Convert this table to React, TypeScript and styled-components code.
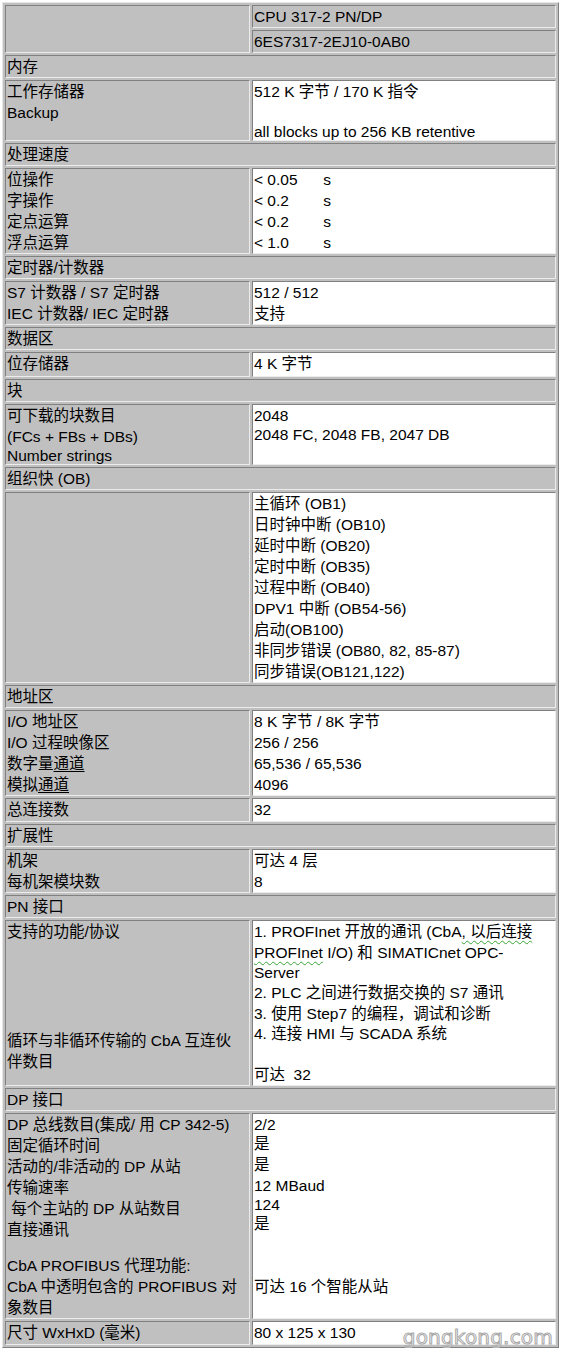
import React from 'react'
import styled, { createGlobalStyle } from 'styled-components'

type Ln = React.ReactNode | [React.ReactNode, number]

interface Pair {
  left: Ln[]
  right: Ln[]
}

type Row = { section: string } | Pair

const GlobalStyle = createGlobalStyle`
  html, body {
    margin: 0;
    padding: 0;
    background: #fff;
  }
`

const Page = styled.div`
  padding: 2px 0 0 2px;
  width: 557px;
`

const Sheet = styled.table`
  width: 557px;
  table-layout: fixed;
  border-collapse: separate;
  border-spacing: 2px;
  border: 1px solid;
  border-color: #e6e6e6 #808080 #808080 #e6e6e6;
  background: #c0c0c0;
  font-family: "Liberation Sans", "Noto Sans CJK SC", sans-serif;
  font-size: 15.5px;
  line-height: 21px;
  color: #000;
`

const KeyCol = styled.col`
  width: 245px;
`

const Cell = styled.td<{ $white?: boolean }>`
  position: relative;
  vertical-align: top;
  padding: 0 1px;
  border: 1px solid;
  border-color: #808080 #ececec #ececec #808080;
  background: ${(p) => (p.$white ? '#fff' : '#c0c0c0')};
  white-space: pre;
  overflow: visible;
`

const Line = styled.div<{ $h?: number }>`
  height: ${(p) => p.$h ?? 21}px;
  line-height: 21px;
  white-space: pre;
`

const Squiggle = styled.span`
  text-decoration: underline wavy #3aa53a;
  text-decoration-thickness: 1px;
  text-underline-offset: 3px;
`

const Under = styled.span`
  text-decoration: underline;
  text-underline-offset: 2px;
`

const Watermark = styled.span`
  position: absolute;
  right: 2px;
  bottom: -5px;
  font-family: "DejaVu Sans", sans-serif;
  font-size: 20px;
  line-height: 24px;
  letter-spacing: 0.2px;
  color: rgba(250, 250, 250, 0.9);
  -webkit-text-stroke: 1px #a8a8a8;
  pointer-events: none;
`

const rows: Row[] = [
  { section: '内存' },
  {
    left: ['工作存储器', ['Backup', 19]],
    right: ['512 K 字节 / 170 K 指令', ['', 19], ['all blocks up to 256 KB retentive', 19]],
  },
  { section: '处理速度' },
  {
    left: ['位操作', '字操作', '定点运算', '浮点运算'],
    right: ['< 0.05      s', '< 0.2        s', '< 0.2        s', '< 1.0        s'],
  },
  { section: '定时器/计数器' },
  {
    left: ['S7 计数器 / S7 定时器', 'IEC 计数器/ IEC 定时器'],
    right: ['512 / 512', '支持'],
  },
  { section: '数据区' },
  { left: [['位存储器', 23]], right: ['4 K 字节'] },
  { section: '块' },
  {
    left: ['可下载的块数目', ['(FCs + FBs + DBs)', 19], ['Number strings', 19]],
    right: [['2048', 19], '2048 FC, 2048 FB, 2047 DB'],
  },
  { section: '组织快 (OB)' },
  {
    left: [],
    right: [
      '主循环 (OB1)',
      '日时钟中断 (OB10)',
      '延时中断 (OB20)',
      '定时中断 (OB35)',
      '过程中断 (OB40)',
      'DPV1 中断 (OB54-56)',
      '启动(OB100)',
      '非同步错误 (OB80, 82, 85-87)',
      '同步错误(OB121,122)',
    ],
  },
  { section: '地址区' },
  {
    left: [
      'I/O 地址区',
      'I/O 过程映像区',
      <>数字量<Under>通道</Under></>,
      <>模拟<Under>通道</Under></>,
    ],
    right: ['8 K 字节 / 8K 字节', '256 / 256', '65,536 / 65,536', ['4096', 20]],
  },
  { left: [['总连接数', 22]], right: ['32'] },
  { section: '扩展性' },
  { left: ['机架', '每机架模块数'], right: ['可达 4 层', '8'] },
  { section: 'PN 接口' },
  {
    left: ['支持的功能/协议', ['', 88], '循环与非循环传输的 CbA 互连伙', '伴数目'],
    right: [
      <>1. PROFInet 开放的通讯 (CbA<Squiggle>, 以后连接</Squiggle></>,
      [<><Squiggle>PROFInet</Squiggle> I/O) 和 SIMATICnet OPC-</>, 20],
      ['Server', 20],
      '2. PLC 之间进行数据交换的 S7 通讯',
      ['3. 使用 Step7 的编程，调试和诊断', 20],
      ['4. 连接 HMI 与 SCADA 系统', 20],
      '',
      '可达  32',
    ],
  },
  { section: 'DP 接口' },
  {
    left: [
      'DP 总线数目(集成/ 用 CP 342-5)',
      '固定循环时间',
      '活动的/非活动的 DP 从站',
      '传输速率',
      ' 每个主站的 DP 从站数目',
      '直接通讯',
      ['', 15],
      'CbA PROFIBUS 代理功能:',
      'CbA 中透明包含的 PROFIBUS 对',
      '象数目',
    ],
    right: [
      ['2/2', 19],
      '是',
      '是',
      ['12 MBaud', 19],
      ['124', 19],
      '是',
      ['', 42],
      '可达 16 个智能从站',
    ],
  },
]

function Lines({ items }: { items: Ln[] }) {
  return (
    <>
      {items.map((item, i) =>
        Array.isArray(item) ? (
          <Line key={i} $h={item[1] as number}>
            {item[0]}
          </Line>
        ) : (
          <Line key={i}>{item}</Line>
        ),
      )}
    </>
  )
}

export default function App() {
  return (
    <Page>
      <GlobalStyle />
      <Sheet>
        <colgroup>
          <KeyCol />
          <col />
        </colgroup>
        <tbody>
          <tr>
            <Cell rowSpan={2} />
            <Cell>CPU 317-2 PN/DP</Cell>
          </tr>
          <tr>
            <Cell>6ES7317-2EJ10-0AB0</Cell>
          </tr>
          {rows.map((row, i) =>
            'section' in row ? (
              <tr key={i}>
                <Cell colSpan={2}>{row.section}</Cell>
              </tr>
            ) : (
              <tr key={i}>
                <Cell>
                  <Lines items={row.left} />
                </Cell>
                <Cell $white>
                  <Lines items={row.right} />
                </Cell>
              </tr>
            ),
          )}
          <tr>
            <Cell>
              <Line $h={22}>尺寸 WxHxD (毫米)</Line>
            </Cell>
            <Cell $white>
              <Line $h={22}>80 x 125 x 130</Line>
              <Watermark>gongkong.com</Watermark>
            </Cell>
          </tr>
        </tbody>
      </Sheet>
    </Page>
  )
}
